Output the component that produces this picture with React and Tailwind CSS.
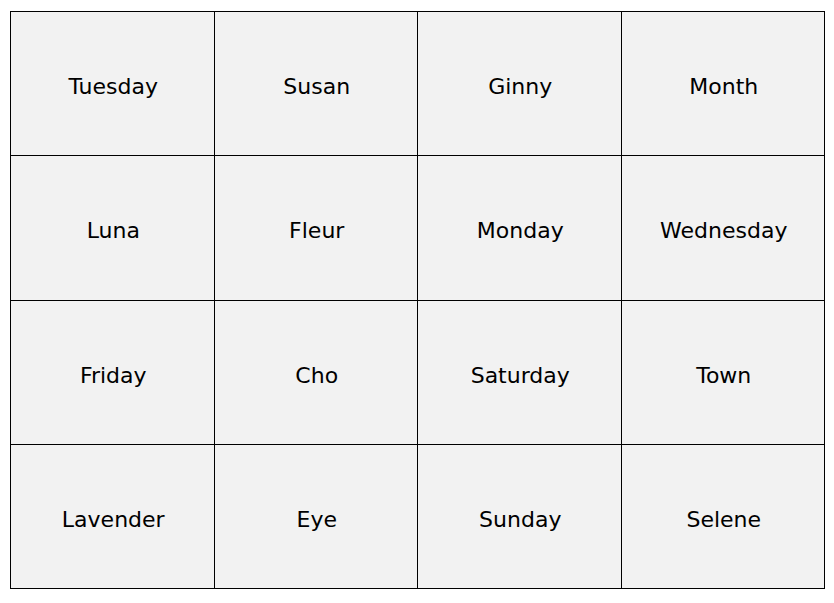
const words = [
  "Tuesday", "Susan", "Ginny", "Month",
  "Luna", "Fleur", "Monday", "Wednesday",
  "Friday", "Cho", "Saturday", "Town",
  "Lavender", "Eye", "Sunday", "Selene",
];

export default function App() {
  return (
    <div className="w-[834px] h-[603px] bg-white pt-[11px] pl-[10px]">
      <div className="grid grid-cols-4 grid-rows-4 w-[815px] h-[578px] border-t border-l border-black bg-[#f2f2f2]">
        {words.map((w) => (
          <div
            key={w}
            className="flex items-center justify-center pt-[6px] pl-[2px] border-r border-b border-black text-[22px] text-black font-['DejaVu_Sans',sans-serif]"
          >
            {w}
          </div>
        ))}
      </div>
    </div>
  );
}
